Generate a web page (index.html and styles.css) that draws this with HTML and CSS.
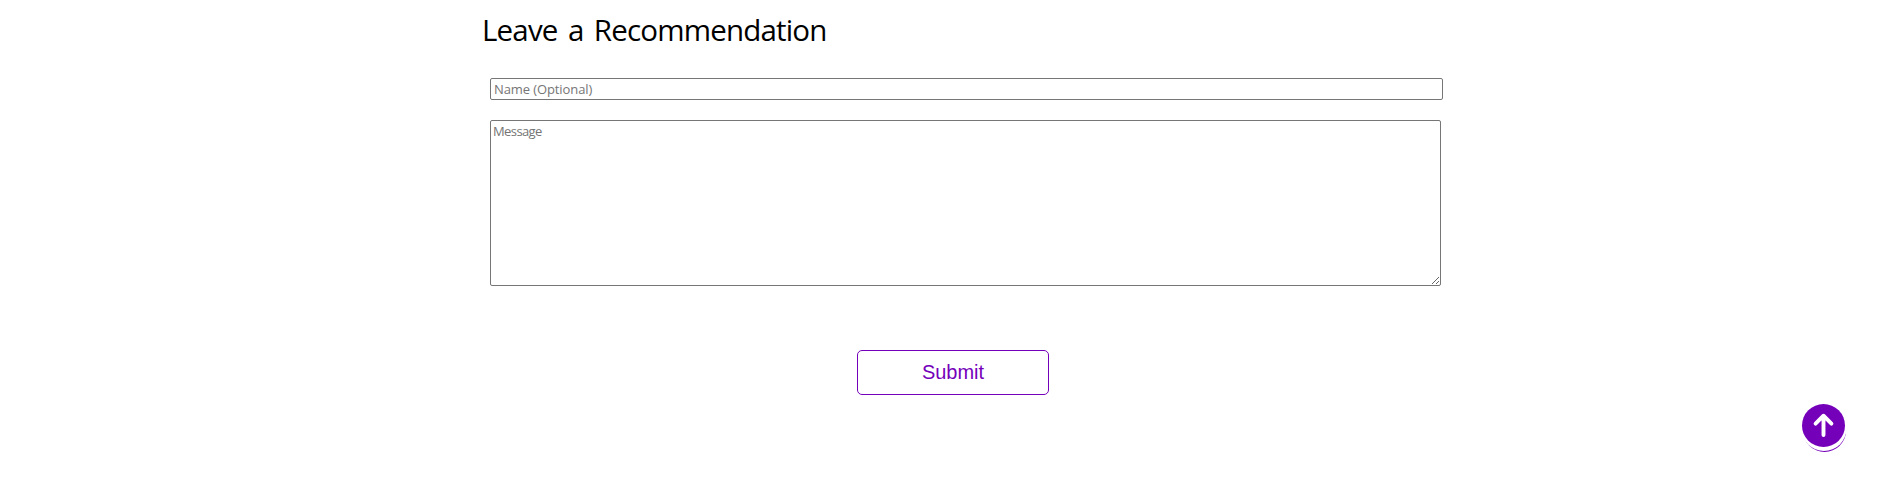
FILE: index.html
```html
<!DOCTYPE html>
<html lang="en">
<head>
<meta charset="utf-8">
<title>Leave a Recommendation</title>
<link rel="stylesheet" href="styles.css">
</head>
<body>
<main class="recommend">
  <h2 class="title">Leave a Recommendation</h2>
  <form class="form">
    <input class="name" type="text" placeholder="Name (Optional)">
    <textarea class="message" placeholder="Message"></textarea>
    <button class="submit" type="button">Submit</button>
  </form>
</main>
<a class="to-top" href="#" aria-label="Back to top">
  <svg viewBox="0 0 43 43" width="43" height="43"><path d="M21.5 31V11.8M13.6 19.6L21.5 11.7L29.4 19.6"/></svg>
</a>
</body>
</html>
```
FILE: styles.css
```css
* {
  box-sizing: border-box;
}
body {
  margin: 0;
  background: #fff;
  overflow: hidden;
  font-family: "Trebuchet MS", "Open Sans", sans-serif;
}
.recommend {
  width: 961px;
  margin-left: 482px;
  padding-top: 10px;
}
.title {
  margin: 0;
  height: 40px;
  line-height: 40px;
  font-size: 29.5px;
  font-weight: 400;
  letter-spacing: -0.82px;
  word-spacing: 3.5px;
  color: #000;
  white-space: nowrap;
}
.form {
  display: flex;
  flex-direction: column;
  align-items: flex-start;
  padding: 28px 0 0 8px;
}
.name,
.message {
  border: 1px solid #767676;
  border-radius: 2px;
  background: #fff;
  font-family: inherit;
  font-size: 13px;
  outline: none;
}
.name {
  width: 953px;
  height: 22px;
  padding: 1px 3px;
  letter-spacing: -0.1px;
}
.message {
  width: 951px;
  height: 166px;
  margin-top: 20px;
  padding: 1px 2px 2px;
  letter-spacing: -0.6px;
  resize: both;
}
.name::placeholder,
.message::placeholder {
  color: #757575;
}
.submit {
  width: 192px;
  height: 45px;
  margin: 64px 0 0 367px;
  padding: 0;
  border: 1px solid #7500ba;
  border-radius: 5px;
  background: #fff;
  color: #7500ba;
  font: 20px "Liberation Sans", Arial, sans-serif;
}
.to-top {
  position: fixed;
  right: 54px;
  bottom: 30px;
  width: 43px;
  height: 43px;
  border-radius: 50%;
  background: #7500ba;
  box-shadow: 0.5px 3px 0 1px #fff, 1px 5px 0 #7500ba;
}
.to-top svg {
  display: block;
  fill: none;
  stroke: #fff;
  stroke-width: 3.9;
  stroke-linecap: round;
  stroke-linejoin: round;
}
```
